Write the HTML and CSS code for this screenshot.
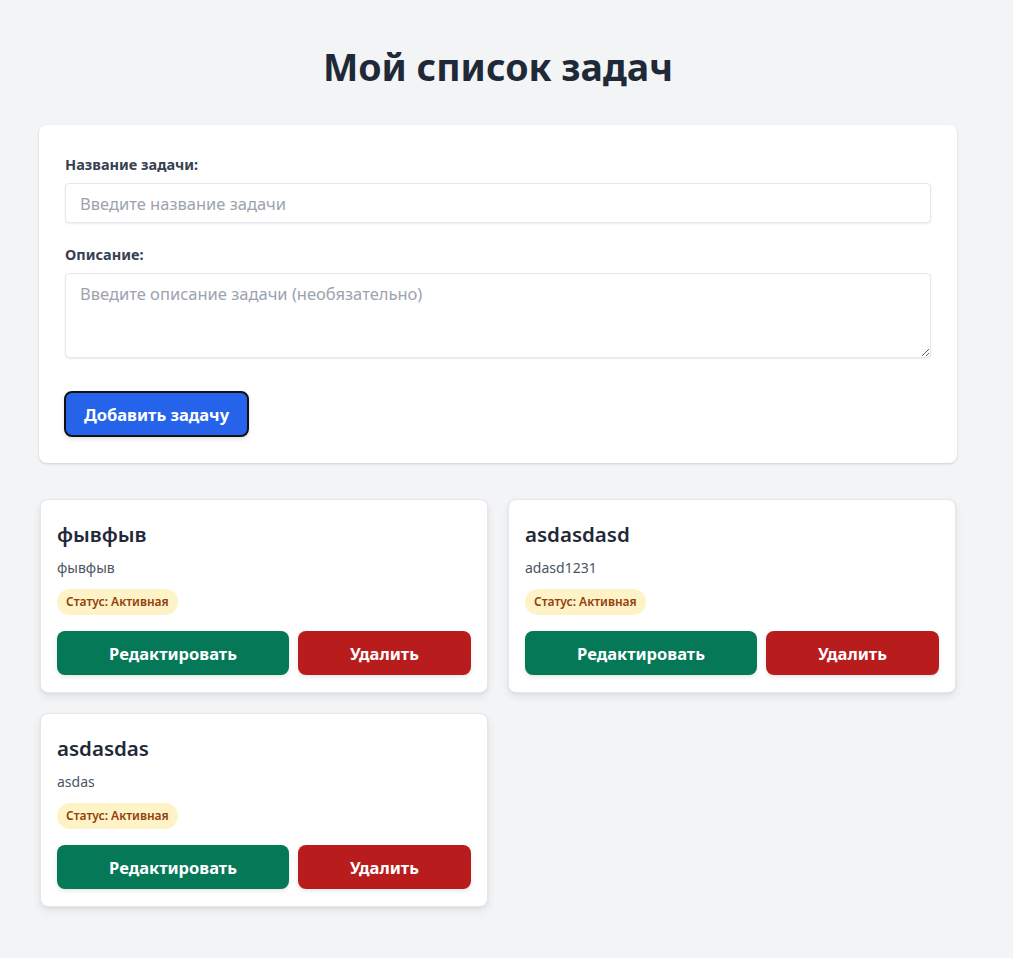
FILE: index.html
```html
<!DOCTYPE html>
<html lang="ru">
<head>
<meta charset="utf-8">
<title>Мой список задач</title>
<link rel="stylesheet" href="styles.css">
</head>
<body>
<div class="page">
  <h1 class="title">Мой список задач</h1>

  <form class="form-card">
    <div class="field">
      <label class="label" for="t">Название задачи:</label>
      <input class="input" id="t" type="text" placeholder="Введите название задачи">
    </div>
    <div class="field">
      <label class="label" for="d">Описание:</label>
      <textarea class="textarea" id="d" placeholder="Введите описание задачи (необязательно)"></textarea>
    </div>
    <button class="btn-add" type="button">Добавить задачу</button>
  </form>

  <div class="tasks">
    <div class="task">
      <h3 class="task-title">фывфыв</h3>
      <p class="task-desc">фывфыв</p>
      <span class="badge">Статус: Активная</span>
      <div class="actions">
        <button class="btn btn-edit" type="button">Редактировать</button>
        <button class="btn btn-del" type="button">Удалить</button>
      </div>
    </div>
    <div class="task">
      <h3 class="task-title">asdasdasd</h3>
      <p class="task-desc">adasd1231</p>
      <span class="badge">Статус: Активная</span>
      <div class="actions">
        <button class="btn btn-edit" type="button">Редактировать</button>
        <button class="btn btn-del" type="button">Удалить</button>
      </div>
    </div>
    <div class="task">
      <h3 class="task-title">asdasdas</h3>
      <p class="task-desc">asdas</p>
      <span class="badge">Статус: Активная</span>
      <div class="actions">
        <button class="btn btn-edit" type="button">Редактировать</button>
        <button class="btn btn-del" type="button">Удалить</button>
      </div>
    </div>
  </div>
</div>
</body>
</html>
```

FILE: styles.css
```css
* { box-sizing: border-box; }

html, body {
  margin: 0;
  background: #f3f4f6;
}

body {
  font-family: "Noto Sans", "Open Sans", "Liberation Sans", sans-serif;
  color: #1f2937;
}

.page {
  width: 918px;
  margin-left: 39px;
  padding: 45px 0 40px;
}

.title {
  margin: 0 0 36px;
  text-align: center;
  font-size: 37.5px;
  line-height: 44px;
  font-weight: 700;
  color: #1f2937;
}

.form-card {
  background: #fff;
  border-radius: 8px;
  box-shadow: 0 1px 3px rgba(0,0,0,0.1), 0 1px 2px rgba(0,0,0,0.06);
  padding: 29px 26px 26px;
  display: flex;
  flex-direction: column;
  align-items: flex-start;
}

.field {
  width: 100%;
  display: flex;
  flex-direction: column;
  margin-bottom: 21px;
}

.field + .field { margin-bottom: 33px; }

.label {
  font-size: 14.5px;
  line-height: 20px;
  font-weight: 700;
  color: #374151;
  margin-bottom: 9px;
}

.input, .textarea {
  width: 100%;
  font-family: inherit;
  font-size: 16.5px;
  color: #1f2937;
  background: #fff;
  border: 1px solid #e5e7eb;
  border-radius: 4px;
  box-shadow: 0 1px 2px rgba(0,0,0,0.08);
  padding: 8px 14px;
  outline: none;
}

.input { height: 40px; line-height: 22px; }

.textarea {
  height: 85px;
  line-height: 24px;
  resize: vertical;
  padding-top: 8px;
}

.input::placeholder, .textarea::placeholder { color: #9ca3af; }

.btn-add {
  font-family: inherit;
  height: 46px;
  width: 185px;
  margin-left: -1px;
  font-size: 16.5px;
  font-weight: 700;
  color: #fff;
  background: #2563eb;
  border: 2px solid #111;
  border-radius: 8px;
  box-shadow: 0 2px 4px rgba(0,0,0,0.12);
  cursor: pointer;
}

.tasks {
  margin-top: 36px;
  padding: 0 1px;
  display: grid;
  grid-template-columns: 1fr 1fr;
  gap: 20px;
  align-items: start;
}

.task {
  background: #fff;
  border: 1px solid #e5e7eb;
  border-radius: 8px;
  box-shadow: 0 4px 8px rgba(0,0,0,0.07), 0 1px 3px rgba(0,0,0,0.05);
  padding: 20px 16px 17px;
  display: flex;
  flex-direction: column;
  align-items: flex-start;
}

.task-title {
  margin: 0;
  font-size: 20.5px;
  line-height: 28px;
  font-weight: 600;
  color: #1f2937;
}

.task-desc {
  margin: 10px 0 11px;
  font-size: 14px;
  line-height: 20px;
  color: #4b5563;
}

.badge {
  display: inline-block;
  background: #fef3c7;
  color: #92400e;
  font-size: 12px;
  font-weight: 600;
  line-height: 18px;
  padding: 4px 9px;
  border-radius: 999px;
}

.actions {
  margin-top: 16px;
  width: 100%;
  display: flex;
  gap: 9px;
}

.btn {
  flex: 1 1 auto;
  height: 44px;
  font-family: inherit;
  font-size: 16.5px;
  font-weight: 700;
  color: #fff;
  border: none;
  border-radius: 8px;
  box-shadow: 0 2px 4px rgba(0,0,0,0.1);
  cursor: pointer;
}

.btn-edit { background: #047857; }
.btn-del { background: #b91c1c; }
```
